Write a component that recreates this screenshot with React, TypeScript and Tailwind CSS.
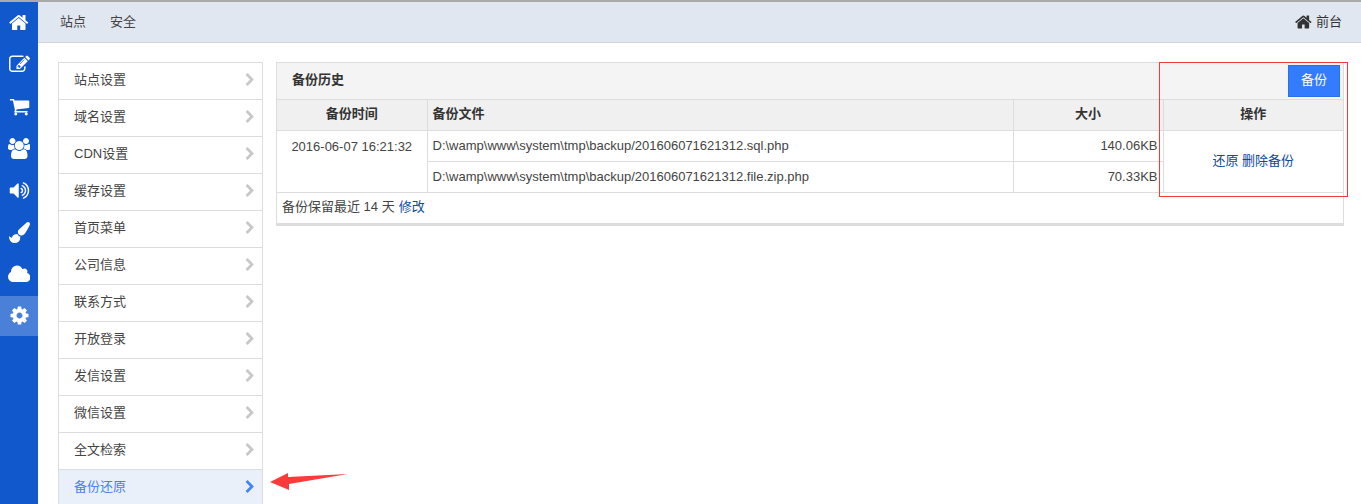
const ICONS = {
  home: { w: 1664, d: 'M1408 992v480q0 26-19 45t-45 19h-384v-384h-256v384h-384q-26 0-45-19t-19-45v-480q0-1 .5-3t.5-3l575-474 575 474q1 2 1 6zm223-69l-62 74q-8 9-21 11h-3q-13 0-21-7l-692-577-692 577q-12 8-24 7-13-2-21-11l-62-74q-8-10-7-23.500t11-21.500l719-599q32-26 76-26t76 26l244 204v-195q0-14 9-23t23-9h192q14 0 23 9t9 23v408l219 182q10 8 11 21.500t-7 23.500z' },
  edit: { w: 1792, d: 'M888 1184l116-116-152-152-116 116v56h96v96h56zm440-720q-16-16-33 1l-350 350q-17 17-1 33t33-1l350-350q17-17 1-33zm80 594v190q0 119-84.500 203.500t-203.500 84.500h-832q-119 0-203.500-84.500t-84.500-203.500v-832q0-119 84.500-203.500t203.500-84.500h832q63 0 117 25 15 7 18 23 3 17-9 29l-49 49q-14 14-32 8-23-6-45-6h-832q-66 0-113 47t-47 113v832q0 66 47 113t113 47h832q66 0 113-47t47-113v-126q0-13 9-22l64-64q15-15 35-7t20 29zm-96-738l288 288-672 672h-288v-288zm444 132l-92 92-288-288 92-92q28-28 68-28t68 28l152 152q28 28 28 68t-28 68z' },
  cart: { w: 1792, d: 'M704 1536q0 52-38 90t-90 38-90-38-38-90 38-90 90-38 90 38 38 90zm896 0q0 52-38 90t-90 38-90-38-38-90 38-90 90-38 90 38 38 90zm128-1088v512q0 24-16.500 42.500t-40.500 21.500l-1044 122q13 60 13 70 0 16-24 64h920q26 0 45 19t19 45-19 45-45 19h-1024q-26 0-45-19t-19-45q0-11 8-31.500t16-36 21.500-40 15.500-29.500l-177-823h-204q-26 0-45-19t-19-45 19-45 45-19h256q16 0 28.500 6.500t19.500 15.500 13 24.500 8 26 5.500 29.500 4.500 26h1201q26 0 45 19t19 45z' },
  users: { w: 1920, d: 'M593 896q-162 5-265 128h-134q-82 0-138-40.500t-56-118.500q0-353 124-353 6 0 43.500 21t97.500 42.500 119 21.500q67 0 133-23-5 37-5 66 0 139 81 256zm1071 637q0 120-73 189.500t-194 69.500h-874q-121 0-194-69.500t-73-189.500q0-53 3.500-103.500t14-109 26.500-108.500 43-97.500 62-81 85.500-53.500 111.500-20q10 0 43 21.500t73 48 107 48 135 21.500 135-21.500 107-48 73-48 43-21.500q61 0 111.500 20t85.500 53.500 62 81 43 97.500 26.500 108.500 14 109 3.500 103.500zm-1024-1277q0 106-75 181t-181 75-181-75-75-181 75-181 181-75 181 75 75 181zm704 384q0 159-112.500 271.500t-271.500 112.500-271.500-112.500-112.500-271.500 112.500-271.500 271.500-112.500 271.500 112.500 112.500 271.500zm576 225q0 78-56 118.500t-138 40.500h-134q-103-123-265-128 81-117 81-256 0-29-5-66 66 23 133 23 59 0 119-21.500t97.500-42.500 43.500-21q124 0 124 353zm-128-609q0 106-75 181t-181 75-181-75-75-181 75-181 181-75 181 75 75 181z' },
  volume: { w: 1792, d: 'M832 352v1088q0 26-19 45t-45 19-45-19l-333-333h-262q-26 0-45-19t-19-45v-384q0-26 19-45t45-19h262l333-333q19-19 45-19t45 19 19 45zm384 544q0 76-42.500 141.500t-112.500 93.500q-10 5-25 5-26 0-45-18.500t-19-45.500q0-21 12-35.500t29-25 34-23 29-36 12-56.500-12-56.500-29-36-34-23-29-25-12-35.500q0-27 19-45.500t45-18.500q15 0 25 5 70 27 112.500 93t42.500 142zm256 0q0 153-85 282.500t-225 188.500q-13 5-25 5-27 0-46-19t-19-45q0-39 39-59 56-29 76-44 74-54 115.500-135.500t41.500-173.500-41.500-173.500-115.500-135.500q-20-15-76-44-39-20-39-59 0-26 19-45t45-19q13 0 26 5 140 59 225 188.500t85 282.500zm256 0q0 230-127 422.500t-338 283.500q-13 5-26 5-26 0-45-19t-19-45q0-36 39-59 7-4 22.500-10.500t22.500-10.500q46-25 82-51 123-91 192-227t69-289-69-289-192-227q-36-26-82-51-7-4-22.500-10.500t-22.500-10.500q-39-23-39-59 0-26 19-45t45-19q13 0 26 5 211 91 338 283.500t127 422.500z' },
  brush: { w: 1792, d: 'M1615 0q70 0 122.500 46.500t52.500 116.500q0 63-45 151-332 629-465 752-97 91-218 91-126 0-216.500-92.500t-90.500-219.500q0-128 92-212l638-579q59-54 130-54zm-909 1034q39 76 106.500 130t150.500 76l1 71q4 213-129.500 347t-348.500 134q-123 0-218-46.500t-152.500-127.500-86.500-183-29-220q7 5 41 30t62 44.500 59 36.500 46 17q41 0 55-37 25-66 57.500-112.500t69.500-76 88-47.500 103-25.500 125-10.500z' },
  cloud: { w: 1920, d: 'M1920 1152q0 159-112.500 271.500t-271.500 112.500h-1088q-185 0-316.500-131.500t-131.500-316.500q0-132 71-241.500t187-163.500q-2-28-2-43 0-212 150-362t362-150q158 0 286.500 88t187.500 230q70-62 166-62 106 0 181 75t75 181q0 75-41 138 129 30 213 134.500t84 239.500z' },
  cog: { w: 1792, d: 'M1152 896q0-106-75-181t-181-75-181 75-75 181 75 181 181 75 181-75 75-181zm512-109v222q0 12-8 23t-20 13l-185 28q-19 54-39 91 35 50 107 138 10 12 10 25t-9 23q-27 37-99 108t-94 71q-12 0-26-9l-138-108q-44 23-91 38-16 136-29 186-7 28-36 28h-222q-14 0-24.500-8.500t-11.500-21.500l-28-184q-49-16-90-37l-141 107q-10 9-25 9-14 0-25-11-126-114-165-168-7-10-7-23 0-12 8-23 15-21 51-66.500t54-70.500q-27-50-41-99l-183-27q-13-2-21-12.500t-8-23.500v-222q0-12 8-23t19-13l186-28q14-46 39-92-40-57-107-138-10-12-10-24 0-10 9-23 26-36 98.500-107.500t94.500-71.500q13 0 26 10l138 107q44-23 91-38 16-136 29-186 7-28 36-28h222q14 0 24.500 8.500t11.500 21.500l28 184q49 16 90 37l142-107q9-9 24-9 13 0 25 10 129 119 165 170 7 8 7 22 0 12-8 23-15 21-51 66.500t-54 70.500q26 50 41 98l183 28q13 2 21 12.500t8 23.500z' },
  chevron: { w: 1792, d: 'M1363 877l-742 742q-19 19-45 19t-45-19l-166-166q-19-19-19-45t19-45l531-531-531-531q-19-19-19-45t19-45l166-166q19-19 45-19t45 19l742 742q19 19 19 45t-19 45z' },
}

type IconName = keyof typeof ICONS

function Icon({ name, size, className }: { name: IconName; size: number; className?: string }) {
  const icon = ICONS[name]
  return (
    <svg width={(size * icon.w) / 1792} height={size} viewBox={`0 0 ${icon.w} 1792`} className={className} fill="currentColor">
      <path d={icon.d} />
    </svg>
  )
}

const sideIcons: IconName[] = ['home', 'edit', 'cart', 'users', 'volume', 'brush', 'cloud', 'cog']

const menu = ['站点设置', '域名设置', 'CDN设置', '缓存设置', '首页菜单', '公司信息', '联系方式', '开放登录', '发信设置', '微信设置', '全文检索', '备份还原']

export default function App() {
  return (
    <div className="relative flex h-[504px] flex-col overflow-hidden border-t-2 border-[#aaaaaa] bg-white font-['Liberation_Sans','Noto_Sans_CJK_SC',sans-serif] text-[13px] text-[#444]">
      <div className="flex flex-1 overflow-hidden">
        {/* Left icon bar */}
        <div className="flex w-[38px] shrink-0 flex-col bg-[#1158cc]">
          {sideIcons.map((name) => (
            <div key={name} className={`flex shrink-0 items-center justify-center pb-[2px] text-white ${name === 'cog' ? 'h-[40px] bg-[#4a80d8]' : 'h-[42px]'}`}>
              <Icon name={name} size={21} />
            </div>
          ))}
        </div>

        <div className="flex min-w-0 flex-1 flex-col">
          {/* Top bar */}
          <div className="flex h-[41px] shrink-0 items-center justify-between border-b border-[#d5d5d5] bg-[#e1e7f0] pb-px pl-[22px] pr-[19px]">
            <div className="flex gap-6">
              <span>站点</span>
              <span>安全</span>
            </div>
            <div className="flex items-center gap-1 text-[#333]">
              <Icon name="home" size={18} />
              <span>前台</span>
            </div>
          </div>

          <div className="flex gap-[13px] pl-5 pr-[17px] pt-[19px]">
            {/* Menu */}
            <div className="w-[205px] shrink-0 border border-b-0 border-[#dddddd]">
              {menu.map((name, i) => {
                const active = i === menu.length - 1
                return (
                  <div key={name} className={`flex h-[37px] items-center justify-between border-b border-[#dddddd] pb-[2px] pl-[15px] pr-[5px] ${active ? 'bg-[#eaf0f9] text-[#4a7ff0]' : ''}`}>
                    <span>{name}</span>
                    <Icon name="chevron" size={14} className={active ? 'text-[#3f87f5]' : 'text-[#c8c8c8]'} />
                  </div>
                )
              })}
            </div>

            {/* Backup panel */}
            <div className="h-fit min-w-0 flex-1 border border-b-[3px] border-[#dddddd]">
              <div className="flex h-[36px] items-center justify-between bg-[#f4f4f4] pl-[15px] pr-[3px]">
                <span className="pb-[2px] font-bold text-[#333]">备份历史</span>
                <button className="flex h-[32px] w-[52px] items-center justify-center border border-[#2a70e8] bg-[#337cff] pb-[2px] text-white">备份</button>
              </div>
              <table className="w-full table-fixed border-collapse">
                <thead>
                  <tr className="h-[31px] bg-[#f0f0f0] font-bold text-[#333]">
                    <th className="w-[150px] border border-l-0 border-[#dddddd] pb-[2px] font-bold">备份时间</th>
                    <th className="border border-[#dddddd] px-[5px] pb-[2px] text-left font-bold">备份文件</th>
                    <th className="w-[150px] border border-[#dddddd] pb-[2px] font-bold">大小</th>
                    <th className="w-[180px] border border-r-0 border-[#dddddd] pb-[2px] font-bold">操作</th>
                  </tr>
                </thead>
                <tbody>
                  <tr className="h-[31px]">
                    <td rowSpan={2} className="border border-l-0 border-[#dddddd] pt-[6px] text-center align-top">2016-06-07 16:21:32</td>
                    <td className="border border-[#dddddd] px-[5px]">D:\wamp\www\system\tmp\backup/201606071621312.sql.php</td>
                    <td className="border border-[#dddddd] px-[5px] text-right">140.06KB</td>
                    <td rowSpan={2} className="border border-r-0 border-[#dddddd] pb-[2px] text-center text-[#0d4a9c]">还原 删除备份</td>
                  </tr>
                  <tr className="h-[31px]">
                    <td className="border border-[#dddddd] px-[5px]">D:\wamp\www\system\tmp\backup/201606071621312.file.zip.php</td>
                    <td className="border border-[#dddddd] px-[5px] text-right">70.33KB</td>
                  </tr>
                </tbody>
              </table>
              <div className="flex h-[30px] items-center gap-1 pb-[2px] pl-[5px]">
                <span>备份保留最近 14 天</span>
                <span className="text-[#0d4a9c]">修改</span>
              </div>
            </div>
          </div>
        </div>
      </div>

      {/* Red annotation box */}
      <div className="absolute left-[1159px] top-[60px] h-[135px] w-[189px] border border-[#f23a3a]" />

      {/* Red annotation arrow */}
      <svg className="absolute left-[270px] top-[470px]" width="80" height="20" viewBox="0 0 80 20">
        <polygon points="0,10 18,1 18,5 78,2 19,12 19,18" fill="#fb3b3b" />
      </svg>
    </div>
  )
}
